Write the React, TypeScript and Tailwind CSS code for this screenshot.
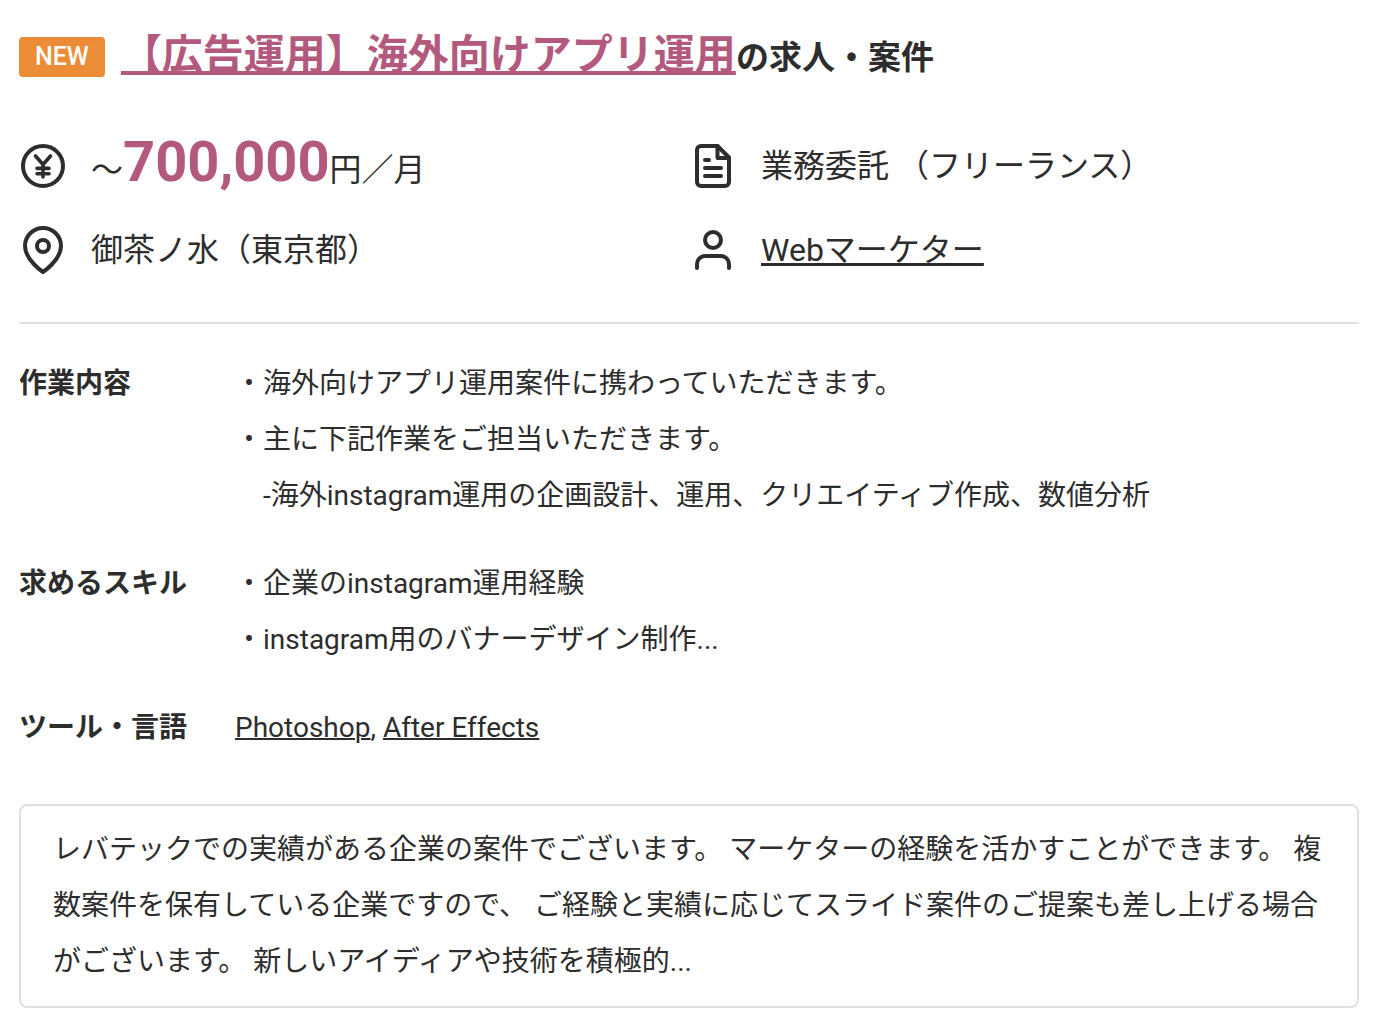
import React from 'react';

interface DetailRow {
  label: string;
  lines: string[];
}

const details: DetailRow[] = [
  {
    label: '作業内容',
    lines: [
      '・海外向けアプリ運用案件に携わっていただきます。',
      '・主に下記作業をご担当いただきます。',
      '　-海外instagram運用の企画設計、運用、クリエイティブ作成、数値分析',
    ],
  },
  {
    label: '求めるスキル',
    lines: ['・企業のinstagram運用経験', '・instagram用のバナーデザイン制作...'],
  },
];

const tools = ['Photoshop', 'After Effects'];

// ============================================
// Icons
// ============================================

const Icon: React.FC<{ children: React.ReactNode }> = ({ children }) => (
  <svg
    className="size-12 shrink-0"
    viewBox="0 0 48 48"
    fill="none"
    stroke="currentColor"
    strokeWidth="4"
    strokeLinecap="round"
    strokeLinejoin="round"
    aria-hidden="true"
  >
    {children}
  </svg>
);

const YenIcon = () => (
  <Icon>
    <circle cx="24" cy="24" r="20" />
    <path strokeWidth="3.6" d="M16.5 14L24 22.5L31.5 14M24 22.5V35M18 26.4H30M18 31.8H30" />
  </Icon>
);

const FileIcon = () => (
  <Icon>
    <path d="M28.5 4H12a4 4 0 0 0-4 4v32a4 4 0 0 0 4 4h24a4 4 0 0 0 4-4V15.5z" />
    <path d="M28.5 4V16H40M16 18H20M16 26H32M16 34H32" />
  </Icon>
);

const PinIcon = () => (
  <Icon>
    <path d="M42 20c0 14-18 26-18 26S6 34 6 20a18 18 0 0 1 36 0z" />
    <circle cx="24" cy="20" r="6" />
  </Icon>
);

const UserIcon = () => (
  <Icon>
    <path d="M40 42v-4a8 8 0 0 0-8-8H16a8 8 0 0 0-8 8v4" />
    <circle cx="24" cy="14" r="8" />
  </Icon>
);

// ============================================
// Job card
// ============================================

const Detail: React.FC<{ label: string; children: React.ReactNode }> = ({ label, children }) => (
  <div className="flex">
    <dt className="w-[216px] shrink-0 font-bold">{label}</dt>
    <dd className="min-w-0 flex-1">{children}</dd>
  </div>
);

export default function App() {
  return (
    <article
      lang="ja"
      className="bg-white pt-[25px] pr-[25px] pb-7 pl-[19px] font-['Roboto','Noto_Sans_CJK_JP',sans-serif] text-[#2d2d2d]"
    >
      <header className="flex items-center gap-4">
        <span className="rounded-sm bg-[#ec8c36] px-4 text-[25px] leading-10 font-medium text-white">NEW</span>
        <h2 className="text-[33px] leading-[60px] font-bold">
          <a
            href="#"
            className="text-[41px] text-[#b4597e] underline decoration-4 underline-offset-2 [text-decoration-skip-ink:none]"
          >
            【広告運用】海外向けアプリ運用
          </a>
          の求人・案件
        </h2>
      </header>

      <ul className="mt-[54px] grid grid-cols-2 gap-y-9 text-[32px] leading-[48px]">
        <li className="flex h-12 items-center gap-6">
          <YenIcon />
          <p>
            〜<span className="text-[56px] font-bold text-[#b4597e]">700,000</span>円／月
          </p>
        </li>
        <li className="flex h-12 items-center gap-6">
          <FileIcon />
          <p>業務委託 （フリーランス）</p>
        </li>
        <li className="flex h-12 items-center gap-6">
          <PinIcon />
          <p>御茶ノ水（東京都）</p>
        </li>
        <li className="flex h-12 items-center gap-6">
          <UserIcon />
          <a href="#" className="underline decoration-3">
            Webマーケター
          </a>
        </li>
      </ul>

      <dl className="mt-12 space-y-8 border-t-2 border-[#e0e0e0] pt-8 text-[28px] leading-[56px]">
        {details.map(row => (
          <Detail key={row.label} label={row.label}>
            {row.lines.map(line => (
              <p key={line}>{line}</p>
            ))}
          </Detail>
        ))}
        <Detail label="ツール・言語">
          {tools.map((tool, i) => (
            <React.Fragment key={tool}>
              {i > 0 && ', '}
              <a href="#" className="underline decoration-2">
                {tool}
              </a>
            </React.Fragment>
          ))}
        </Detail>
      </dl>

      <p className="mt-12 rounded-lg border-2 border-[#e0e0e0] px-8 py-4 text-[28px] leading-[56px]">
        レバテックでの実績がある企業の案件でございます。 マーケターの経験を活かすことができます。
        複数案件を保有している企業ですので、 ご経験と実績に応じてスライド案件のご提案も差し上げる場合がございます。
        新しいアイディアや技術を積極的...
      </p>
    </article>
  );
}
